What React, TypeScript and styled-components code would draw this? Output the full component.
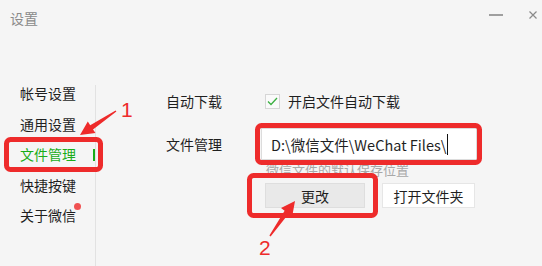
import React from "react";
import styled, { createGlobalStyle } from "styled-components";

const Global = createGlobalStyle`
  html, body { margin: 0; padding: 0; background: #f5f5f5; }
  body { font-family: "Noto Sans CJK SC", "Noto Sans", sans-serif; }
  * { box-sizing: border-box; }
`;

const Window = styled.div`
  position: relative;
  width: 542px;
  height: 266px;
  background: #f5f5f5;
  overflow: hidden;
  display: flex;
  flex-direction: column;
`;

const TitleBar = styled.div`
  height: 36px;
  display: flex;
  align-items: flex-start;
  justify-content: space-between;
  padding: 8px 0 0 10px;
`;

const Title = styled.div`
  font-size: 14px;
  line-height: 20px;
  color: #8a8a8a;
`;

const Controls = styled.div`
  display: flex;
  align-items: center;
  gap: 26px;
  padding: 3px 5px 0 0;
`;

const Body = styled.div`
  flex: 1;
  display: flex;
  padding-top: 42px;
`;

const Sidebar = styled.div`
  width: 95px;
  display: flex;
  flex-direction: column;
`;

const NavItem = styled.div<{ $active?: boolean }>`
  position: relative;
  height: 30.5px;
  line-height: 30.5px;
  padding-left: 20px;
  font-size: 14px;
  color: ${(p) => (p.$active ? "#1aad19" : "#1f1f1f")};
`;

const ActiveBar = styled.span`
  position: absolute;
  right: 0;
  top: 10px;
  width: 2px;
  height: 12px;
  background: #1aad19;
`;

const Dot = styled.span`
  position: absolute;
  left: 74px;
  top: 3px;
  width: 7px;
  height: 7px;
  border-radius: 50%;
  background: #f05252;
`;

const Divider = styled.div`
  width: 1px;
  margin-top: 7px;
  background: #e2e2e2;
  align-self: stretch;
`;

const Content = styled.div`
  flex: 1;
  padding: 11px 0 0 70px;
  display: flex;
  flex-direction: column;
`;

const Row = styled.div<{ $h: number; $mt?: number }>`
  display: flex;
  align-items: center;
  height: ${(p) => p.$h}px;
  margin-top: ${(p) => p.$mt ?? 0}px;
`;

const Label = styled.div<{ $w: number }>`
  width: ${(p) => p.$w}px;
  font-size: 14px;
  color: #1f1f1f;
`;

const CheckBox = styled.span`
  width: 15px;
  height: 15px;
  border: 1px solid #d6d6d6;
  background: #fafafa;
  display: inline-flex;
  align-items: center;
  justify-content: center;
  margin-right: 8px;
`;

const CheckText = styled.span`
  font-size: 14px;
  color: #1f1f1f;
`;

const Input = styled.div`
  width: 216px;
  height: 32px;
  background: #fff;
  border: 1px solid #dcdcdc;
  padding-left: 9px;
  display: flex;
  align-items: center;
  font-size: 14.5px;
  color: #1f1f1f;
  white-space: nowrap;
`;

const Caret = styled.span`
  display: inline-block;
  width: 1px;
  height: 21px;
  background: #111;
  margin-left: 1px;
`;

const Hint = styled.div`
  margin: 0 0 0 100px;
  font-size: 13px;
  line-height: 20px;
  color: #a8a8a8;
`;

const Buttons = styled.div`
  display: flex;
  gap: 17px;
  margin: 3px 0 0 99px;
`;

const Button = styled.div<{ $primary?: boolean; $w: number }>`
  width: ${(p) => p.$w}px;
  height: 25px;
  display: flex;
  align-items: center;
  justify-content: center;
  font-size: 14px;
  color: #1f1f1f;
  background: ${(p) => (p.$primary ? "#e9e9e9" : "#ffffff")};
  border: 1px solid ${(p) => (p.$primary ? "#dedede" : "#e6e6e6")};
`;

const Overlay = styled.svg`
  position: absolute;
  left: 0;
  top: 0;
  pointer-events: none;
`;

const RED = "#ee2b2b";

export default function App() {
  return (
    <>
      <Global />
      <Window>
        <TitleBar>
          <Title>设置</Title>
          <Controls>
            <svg width="14" height="8" viewBox="0 0 14 8">
              <line x1="0" y1="4" x2="14" y2="4" stroke="#8a8a8a" strokeWidth="1.6" />
            </svg>
            <svg width="8" height="8" viewBox="0 0 8 8">
              <path d="M0.5 0.5 L7.5 7.5 M7.5 0.5 L0.5 7.5" stroke="#8a8a8a" strokeWidth="1.2" />
            </svg>
          </Controls>
        </TitleBar>
        <Body>
          <Sidebar>
            <NavItem>帐号设置</NavItem>
            <NavItem>通用设置</NavItem>
            <NavItem $active>
              文件管理
              <ActiveBar />
            </NavItem>
            <NavItem>快捷按键</NavItem>
            <NavItem>
              关于微信
              <Dot />
            </NavItem>
          </Sidebar>
          <Divider />
          <Content>
            <Row $h={24}>
              <Label $w={99}>自动下载</Label>
              <CheckBox>
                <svg width="11" height="9" viewBox="0 0 11 9">
                  <path d="M1 4.5 L4 7.5 L10 1" fill="none" stroke="#3cb043" strokeWidth="1.3" />
                </svg>
              </CheckBox>
              <CheckText>开启文件自动下载</CheckText>
            </Row>
            <Row $h={32} $mt={15}>
              <Label $w={95}>文件管理</Label>
              <Input>
                D:\微信文件\WeChat Files\
                <Caret />
              </Input>
            </Row>
            <Hint>微信文件的默认保存位置</Hint>
            <Buttons>
              <Button $primary $w={100}>更改</Button>
              <Button $w={93}>打开文件夹</Button>
            </Buttons>
          </Content>
        </Body>
        <Overlay width="542" height="266" viewBox="0 0 542 266">
          <rect x="6.5" y="139.5" width="94" height="30" rx="4" fill="none" stroke={RED} strokeWidth="5" />
          <rect x="257.5" y="125.5" width="222" height="37" rx="4" fill="none" stroke={RED} strokeWidth="5" />
          <rect x="249.5" y="175.5" width="126" height="40" rx="4" fill="none" stroke={RED} strokeWidth="5" />
          <polygon
            points="80,135 95.5,133.1 93,129.4 116.4,111.6 115.6,110.4 90.2,125.2 87.8,121.5"
            fill={RED}
          />
          <polygon
            points="295,201 292.2,216.4 288.6,213.7 270.6,236.4 269.4,235.6 284.6,210.7 281,208"
            fill={RED}
          />
          <text x="121" y="117" fontSize="21" fill={RED} fontFamily="Liberation Sans, Arial, sans-serif">1</text>
          <text x="259" y="255" fontSize="21" fill={RED} fontFamily="Liberation Sans, Arial, sans-serif">2</text>
        </Overlay>
      </Window>
    </>
  );
}
